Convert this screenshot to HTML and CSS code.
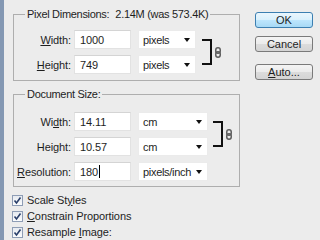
FILE: index.html
```html
<!DOCTYPE html>
<html lang="en">

<head>
    <meta charset="UTF-8">
    <title>Image Size</title>
    <link rel="stylesheet" href="styles.css">
</head>

<body>
    <div class="dialog">
        <div class="main">
            <fieldset class="group pixel-dims">
                <legend>Pixel Dimensions:<span class="size">2.14M (was 573.4K)</span></legend>
                <div class="fields">
                    <div class="rows">
                        <div class="row">
                            <label><u>W</u>idth:</label>
                            <span class="input">1000</span>
                            <span class="select">pixels<i class="arrow"></i></span>
                        </div>
                        <div class="row">
                            <label><u>H</u>eight:</label>
                            <span class="input">749</span>
                            <span class="select">pixels<i class="arrow"></i></span>
                        </div>
                    </div>
                    <div class="link">
                        <span class="bracket"></span>
                        <svg class="chain" width="6" height="11" viewBox="0 0 6 11">
                            <rect x="0.75" y="0.75" width="4.5" height="5.5" rx="2.2" fill="none" stroke="#5e5e5e" stroke-width="1.5" />
                            <rect x="0.75" y="4.75" width="4.5" height="5.5" rx="2.2" fill="none" stroke="#5e5e5e" stroke-width="1.5" />
                        </svg>
                    </div>
                </div>
            </fieldset>

            <fieldset class="group doc-size">
                <legend>Document Size:</legend>
                <div class="fields">
                    <div class="rows">
                        <div class="row">
                            <label>Wi<u>d</u>th:</label>
                            <span class="input">14.11</span>
                            <span class="select">cm<i class="arrow"></i></span>
                        </div>
                        <div class="row">
                            <label>Hei<u>g</u>ht:</label>
                            <span class="input">10.57</span>
                            <span class="select">cm<i class="arrow"></i></span>
                        </div>
                        <div class="row">
                            <label><u>R</u>esolution:</label>
                            <span class="input">180<i class="caret"></i></span>
                            <span class="select">pixels/inch<i class="arrow"></i></span>
                        </div>
                    </div>
                    <div class="link">
                        <span class="bracket"></span>
                        <svg class="chain" width="6" height="11" viewBox="0 0 6 11">
                            <rect x="0.75" y="0.75" width="4.5" height="5.5" rx="2.2" fill="none" stroke="#5e5e5e" stroke-width="1.5" />
                            <rect x="0.75" y="4.75" width="4.5" height="5.5" rx="2.2" fill="none" stroke="#5e5e5e" stroke-width="1.5" />
                        </svg>
                    </div>
                </div>
            </fieldset>

            <div class="checks">
                <div class="check"><span class="box"><svg width="9" height="9" viewBox="0 0 9 9"><path d="M1.5 4.5 L3.5 7 L7.5 1.5" fill="none" stroke="#2a3f6a" stroke-width="1.6" /></svg></span><span>Scale St<u>y</u>les</span></div>
                <div class="check"><span class="box"><svg width="9" height="9" viewBox="0 0 9 9"><path d="M1.5 4.5 L3.5 7 L7.5 1.5" fill="none" stroke="#2a3f6a" stroke-width="1.6" /></svg></span><span><u>C</u>onstrain Proportions</span></div>
                <div class="check"><span class="box"><svg width="9" height="9" viewBox="0 0 9 9"><path d="M1.5 4.5 L3.5 7 L7.5 1.5" fill="none" stroke="#2a3f6a" stroke-width="1.6" /></svg></span><span>Resample <u>I</u>mage:</span></div>
            </div>
        </div>

        <div class="buttons">
            <button class="btn default">OK</button>
            <button class="btn cancel">Cancel</button>
            <button class="btn auto"><u>A</u>uto...</button>
        </div>
    </div>
</body></html>
```

FILE: styles.css
```css
* {
    box-sizing: border-box;
    margin: 0;
    padding: 0;
}

body {
    background-color: #ececec;
    font-family: 'Liberation Sans', Arial, sans-serif;
    font-size: 11px;
    letter-spacing: -0.1px;
    color: #1e1e1e;
    width: 320px;
    height: 240px;
    overflow: hidden;
}

.dialog {
    display: flex;
    height: 240px;
    border-left: 4px solid #8498b3;
}

.main {
    padding-left: 9px;
    padding-top: 7px;
    width: 236px;
}

.group {
    border: 1px solid #aeaeae;
    padding: 9px 0 6px 0;
}

.group legend {
    margin-left: 11px;
    padding: 0 2px;
    line-height: 14px;
    letter-spacing: -0.3px;
}

.size {
    margin-left: 6px;
}

.doc-size {
    margin-top: 6px;
    padding-top: 11px;
    padding-bottom: 5px;
}

.fields {
    display: flex;
    align-items: flex-start;
}

.rows {
    display: flex;
    flex-direction: column;
    gap: 6px;
}

.row {
    display: flex;
    align-items: center;
    height: 19px;
}

.row label {
    width: 57px;
    margin-right: 3px;
    text-align: right;
}

.input {
    display: flex;
    align-items: center;
    width: 57px;
    height: 19px;
    padding-left: 5px;
    background: #fff;
    border: 1px solid #e2e2e2;
    border-top-color: #d4d4d4;
}

.caret {
    display: inline-block;
    width: 1px;
    height: 13px;
    background: #000;
    margin-left: 1px;
}

.select {
    position: relative;
    display: flex;
    align-items: center;
    width: 58px;
    height: 19px;
    margin-left: 7px;
    padding-left: 4px;
    background: #fff;
    border: 1px solid #ebebeb;
    letter-spacing: -0.3px;
}

.doc-size .select {
    width: 70px;
    margin-left: 7px;
}

.arrow {
    position: absolute;
    right: 5px;
    top: 7px;
    border-left: 3.5px solid transparent;
    border-right: 3.5px solid transparent;
    border-top: 4px solid #111;
}

.link {
    display: flex;
    align-items: center;
    height: 44px;
    gap: 3px;
    margin-left: 6px;
}

.doc-size .link {
    margin-left: 5px;
}

.bracket {
    width: 10px;
    height: 26px;
    border: 2px solid #111;
    border-left: none;
}

.chain {
    display: block;
}

.checks {
    margin-top: 5px;
}

.check {
    display: flex;
    align-items: center;
    height: 16px;
}

.box {
    display: flex;
    align-items: center;
    justify-content: center;
    width: 11px;
    height: 11px;
    margin-left: -1px;
    margin-right: 4px;
    border: 1px solid #8e9db5;
    background: linear-gradient(#e6eaf0, #fbfcfd);
}

.buttons {
    display: flex;
    flex-direction: column;
    margin-left: 15px;
    padding-top: 12px;
}

.btn {
    width: 58px;
    height: 16px;
    font-family: 'Liberation Sans', Arial, sans-serif;
    font-size: 11px;
    color: #1e1e1e;
    border: 1px solid #7a7a7a;
    border-radius: 3px;
    background: linear-gradient(#f4f4f4 0%, #ebebeb 50%, #dcdcdc 51%, #d4d4d4 100%);
}

.default {
    border-color: #3c7fb1;
    background: linear-gradient(#eaf6fd 0%, #d9f0fc 50%, #bee6fd 51%, #a7d9f5 100%);
}

.cancel {
    margin-top: 8px;
}

.auto {
    margin-top: 12px;
}
```
